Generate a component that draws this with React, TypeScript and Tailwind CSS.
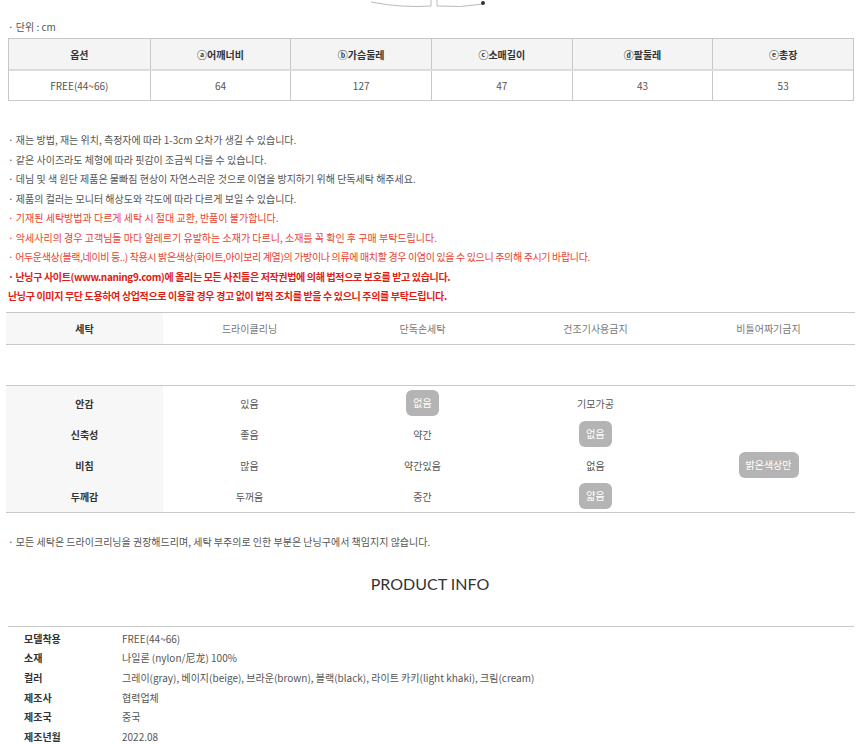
import React from "react";

const font = { fontFamily: '"Noto Sans CJK KR", "Noto Sans", sans-serif' };

const sizeHead = ["옵션", "ⓐ어깨너비", "ⓑ가슴둘레", "ⓒ소매길이", "ⓓ팔둘레", "ⓔ총장"];
const sizeBody = ["FREE(44~66)", "64", "127", "47", "43", "53"];

const notes = [
  { t: "· 재는 방법, 재는 위치, 측정자에 따라 1-3cm 오차가 생길 수 있습니다.", c: "text-[#555]" },
  { t: "· 같은 사이즈라도 체형에 따라 핏감이 조금씩 다를 수 있습니다.", c: "text-[#555]" },
  { t: "· 데님 및 색 원단 제품은 물빠짐 현상이 자연스러운 것으로 이염을 방지하기 위해 단독세탁 해주세요.", c: "text-[#555]" },
  { t: "· 제품의 컬러는 모니터 해상도와 각도에 따라 다르게 보일 수 있습니다.", c: "text-[#555]" },
  { t: "· 기재된 세탁방법과 다르게 세탁 시 절대 교환, 반품이 불가합니다.", c: "text-[#e8412f]" },
  { t: "· 악세사리의 경우 고객님들 마다 알레르기 유발하는 소재가 다르니, 소재를 꼭 확인 후 구매 부탁드립니다.", c: "text-[#e8412f]" },
  { t: "· 어두운색상(블랙,네이비 등..) 착용시 밝은색상(화이트,아이보리 계열)의 가방이나 의류에 매치할 경우 이염이 있을 수 있으니 주의해 주시기 바랍니다.", c: "text-[#e8412f] tracking-[-0.35px]" },
  { t: "· 난닝구 사이트(www.naning9.com)에 올리는 모든 사진들은 저작권법에 의해 법적으로 보호를 받고 있습니다.", c: "text-[#e01b12] font-bold tracking-[-0.35px]" },
  { t: "난닝구 이미지 무단 도용하여 상업적으로 이용할 경우 경고 없이 법적 조치를 받을 수 있으니 주의를 부탁드립니다.", c: "text-[#e01b12] font-bold tracking-[-0.35px]" },
];

const wash = ["드라이클리닝", "단독손세탁", "건조기사용금지", "비틀어짜기금지"];

type Cell = { t: string; on?: boolean };
const fabric: { k: string; v: Cell[] }[] = [
  { k: "안감", v: [{ t: "있음" }, { t: "없음", on: true }, { t: "기모가공" }, { t: "" }] },
  { k: "신축성", v: [{ t: "좋음" }, { t: "약간" }, { t: "없음", on: true }, { t: "" }] },
  { k: "비침", v: [{ t: "많음" }, { t: "약간있음" }, { t: "없음" }, { t: "밝은색상만", on: true }] },
  { k: "두께감", v: [{ t: "두꺼움" }, { t: "중간" }, { t: "얇음", on: true }, { t: "" }] },
];

const info = [
  ["모델착용", "FREE(44~66)"],
  ["소재", "나일론 (nylon/尼龙) 100%"],
  ["컬러", "그레이(gray), 베이지(beige), 브라운(brown), 블랙(black), 라이트 카키(light khaki), 크림(cream)"],
  ["제조사", "협력업체"],
  ["제조국", "중국"],
  ["제조년월", "2022.08"],
];

export default function App() {
  return (
    <div className="w-[860px] h-[744px] overflow-hidden bg-white text-[10px] text-[#555]" style={font}>
      {/* bottom of garment drawing */}
      <div className="h-[14px] flex justify-center">
        <svg width="140" height="14" viewBox="0 0 140 14" className="ml-[2px]">
          <path d="M10 2 Q40 8 70 6 L70 0" fill="none" stroke="#bbb" strokeWidth="1" />
          <path d="M76 0 L76 6 Q100 8 122 4" fill="none" stroke="#bbb" strokeWidth="1" />
          <circle cx="122" cy="3" r="2" fill="#333" />
        </svg>
      </div>

      <div className="pl-[8px] mt-[6px] h-[14px] leading-[14px] text-[#555]">· 단위 : cm</div>

      {/* size table */}
      <div className="mx-[8px] mt-[4px] w-[846px] border border-[#c8c8c8]">
        <div className="grid grid-cols-6 bg-[#f4f4f4] border-b-2 border-[#dcdcdc]">
          {sizeHead.map((h, i) => (
            <div key={h} className={`h-[30px] flex items-center justify-center font-bold text-[#333] ${i > 0 ? "border-l border-[#c8c8c8]" : ""}`}>
              {h}
            </div>
          ))}
        </div>
        <div className="grid grid-cols-6">
          {sizeBody.map((b, i) => (
            <div key={i} className={`h-[29px] flex items-center justify-center text-[#555] ${i > 0 ? "border-l border-[#c8c8c8]" : ""}`}>
              {b}
            </div>
          ))}
        </div>
      </div>

      {/* notes */}
      <div className="mt-[29px] pl-[8px] flex flex-col">
        {notes.map((n, i) => (
          <div key={i} className={`h-[19.5px] leading-[19.5px] whitespace-nowrap ${n.c}`}>
            {n.t}
          </div>
        ))}
      </div>

      {/* wash table */}
      <div className="mx-[6px] mt-[6px] w-[849px] border-t border-b border-[#c8c8c8] grid grid-cols-[157px_repeat(4,1fr)]">
        <div className="h-[31px] bg-[#f7f7f7] flex items-center justify-center font-bold text-[#333]">세탁</div>
        {wash.map((w) => (
          <div key={w} className="h-[31px] flex items-center justify-center text-[#777]">
            {w}
          </div>
        ))}
      </div>

      {/* fabric table */}
      <div className="mx-[6px] mt-[40px] w-[849px] border-t border-b border-[#c8c8c8] grid grid-cols-[157px_repeat(4,1fr)]">
        {fabric.map((r, ri) => (
          <React.Fragment key={r.k}>
            <div className={`h-[31px] bg-[#f7f7f7] flex items-center justify-center font-bold text-[#333] ${ri === 0 ? "pt-[2px] h-[33px]" : ""} ${ri === 3 ? "h-[30px]" : ""}`}>
              {r.k}
            </div>
            {r.v.map((c, ci) => (
              <div key={ci} className={`h-[31px] flex items-center justify-center ${ri === 0 ? "pt-[2px] h-[33px]" : ""} ${ri === 3 ? "h-[30px]" : ""}`}>
                {c.on ? (
                  <span className="px-[7px] h-[26px] leading-[26px] rounded-[6px] bg-[#b4b4b4] text-white">{c.t}</span>
                ) : (
                  <span className="text-[#555]">{c.t}</span>
                )}
              </div>
            ))}
          </React.Fragment>
        ))}
      </div>

      <div className="mt-[22px] pl-[8px] h-[14px] leading-[14px] text-[#555]">
        · 모든 세탁은 드라이크리닝을 권장해드리며, 세탁 부주의로 인한 부분은 난닝구에서 책임지지 않습니다.
      </div>

      <div
        className="mt-[23px] h-[24px] leading-[24px] text-center text-[16px] text-[#333]"
        style={{ fontFamily: "Lato, sans-serif" }}
      >
        PRODUCT INFO
      </div>

      {/* product info */}
      <div className="mx-[8px] mt-[30px] w-[846px] border-t border-[#c8c8c8] pt-[2px]">
        {info.map(([k, v]) => (
          <div key={k} className="flex h-[19.6px] items-center">
            <div className="w-[114px] pl-[16px] font-bold text-[#333]">{k}</div>
            <div className="text-[#555] whitespace-nowrap">{v}</div>
          </div>
        ))}
      </div>
    </div>
  );
}
